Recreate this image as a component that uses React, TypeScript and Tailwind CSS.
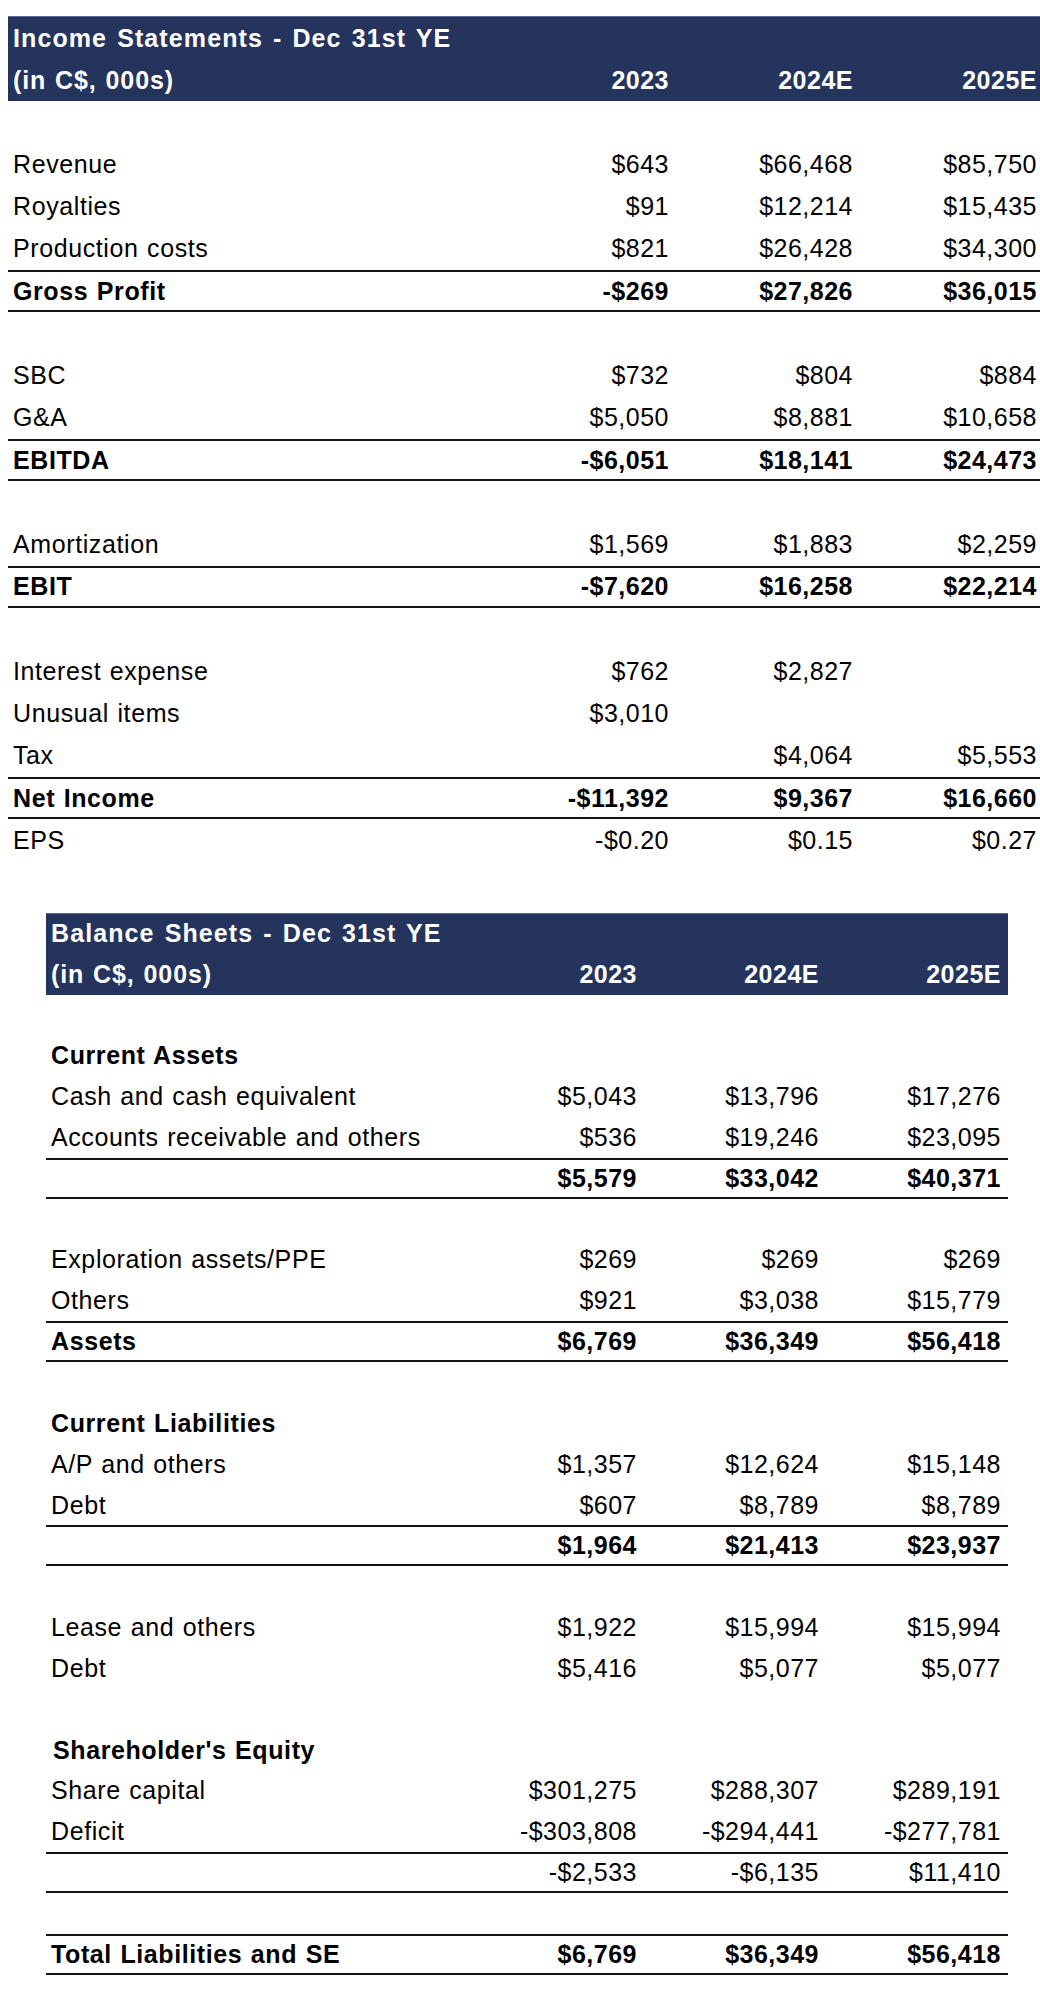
import React from 'react';

type Row = {
  label?: string;
  vals?: string[];
  bold?: boolean;
  rule?: boolean;
  indent?: boolean;
};

const income: Row[] = [
  {},
  { label: 'Revenue', vals: ['$643', '$66,468', '$85,750'] },
  { label: 'Royalties', vals: ['$91', '$12,214', '$15,435'] },
  { label: 'Production costs', vals: ['$821', '$26,428', '$34,300'] },
  { label: 'Gross Profit', vals: ['-$269', '$27,826', '$36,015'], bold: true, rule: true },
  {},
  { label: 'SBC', vals: ['$732', '$804', '$884'] },
  { label: 'G&A', vals: ['$5,050', '$8,881', '$10,658'] },
  { label: 'EBITDA', vals: ['-$6,051', '$18,141', '$24,473'], bold: true, rule: true },
  {},
  { label: 'Amortization', vals: ['$1,569', '$1,883', '$2,259'] },
  { label: 'EBIT', vals: ['-$7,620', '$16,258', '$22,214'], bold: true, rule: true },
  {},
  { label: 'Interest expense', vals: ['$762', '$2,827', ''] },
  { label: 'Unusual items', vals: ['$3,010', '', ''] },
  { label: 'Tax', vals: ['', '$4,064', '$5,553'] },
  { label: 'Net Income', vals: ['-$11,392', '$9,367', '$16,660'], bold: true, rule: true },
  { label: 'EPS', vals: ['-$0.20', '$0.15', '$0.27'] },
];

const balance: Row[] = [
  {},
  { label: 'Current Assets', bold: true },
  { label: 'Cash and cash equivalent', vals: ['$5,043', '$13,796', '$17,276'] },
  { label: 'Accounts receivable and others', vals: ['$536', '$19,246', '$23,095'] },
  { label: '', vals: ['$5,579', '$33,042', '$40,371'], bold: true, rule: true },
  {},
  { label: 'Exploration assets/PPE', vals: ['$269', '$269', '$269'] },
  { label: 'Others', vals: ['$921', '$3,038', '$15,779'] },
  { label: 'Assets', vals: ['$6,769', '$36,349', '$56,418'], bold: true, rule: true },
  {},
  { label: 'Current Liabilities', bold: true },
  { label: 'A/P and others', vals: ['$1,357', '$12,624', '$15,148'] },
  { label: 'Debt', vals: ['$607', '$8,789', '$8,789'] },
  { label: '', vals: ['$1,964', '$21,413', '$23,937'], bold: true, rule: true },
  {},
  { label: 'Lease and others', vals: ['$1,922', '$15,994', '$15,994'] },
  { label: 'Debt', vals: ['$5,416', '$5,077', '$5,077'] },
  {},
  { label: "Shareholder's Equity", bold: true, indent: true },
  { label: 'Share capital', vals: ['$301,275', '$288,307', '$289,191'] },
  { label: 'Deficit', vals: ['-$303,808', '-$294,441', '-$277,781'] },
  { label: '', vals: ['-$2,533', '-$6,135', '$11,410'], rule: true },
  {},
  { label: 'Total Liabilities and SE', vals: ['$6,769', '$36,349', '$56,418'], bold: true, rule: true },
];

const years = ['2023', '2024E', '2025E'];

const Sheet = ({
  title,
  rows,
  rowH,
  headH,
  labelW,
  colW,
  padR,
}: {
  title: string;
  rows: Row[];
  rowH: string;
  headH: string;
  labelW: string;
  colW: string;
  padR: string;
}) => (
  <div className="flex flex-col">
    {/* navy title block */}
    <div className="bg-[#25345d] text-white font-bold border-t border-[#5a6a90]">
      <div className={`flex items-center pl-[5px] tracking-[1.1px] [word-spacing:2px] ${headH}`}>{title}</div>
      <div className={`flex items-center ${headH}`}>
        <div className={`pl-[5px] tracking-[0.9px] [word-spacing:1px] ${labelW}`}>(in C$, 000s)</div>
        {years.map((y) => (
          <div key={y} className={`text-right ${colW} ${padR}`}>
            {y}
          </div>
        ))}
      </div>
    </div>

    {rows.map((r, i) => (
      <div
        key={i}
        className={`flex items-center ${rowH} ${r.bold ? 'font-bold' : ''} ${
          r.rule ? 'border-y-2 border-[#141414]' : ''
        }`}
      >
        <div
          className={`tracking-[0.6px] [word-spacing:1px] ${labelW} ${
            r.indent ? 'pl-[7px]' : 'pl-[5px]'
          }`}
        >
          {r.label}
        </div>
        {r.vals &&
          r.vals.map((v, j) => (
            <div key={j} className={`text-right ${colW} ${padR}`}>
              {v}
            </div>
          ))}
      </div>
    ))}
  </div>
);

export default function App() {
  return (
    <div className="w-[1040px] min-h-[1996px] bg-white text-black font-['Liberation_Sans',Arial,sans-serif] text-[25px] tracking-[0.5px] leading-none overflow-hidden">
      <div className="pt-4 pl-2">
        <Sheet
          title="Income Statements - Dec 31st YE"
          rows={income}
          rowH="h-[42.25px]"
          headH="h-[42px]"
          labelW="w-[480px]"
          colW="w-[184px]"
          padR="pr-[3px]"
        />
      </div>
      <div className="pt-[51px] pl-[46px] w-[1008px]">
        <Sheet
          title="Balance Sheets - Dec 31st YE"
          rows={balance}
          rowH="h-[40.85px]"
          headH="h-[40.5px]"
          labelW="w-[416px]"
          colW="w-[182px]"
          padR="pr-[7px]"
        />
      </div>
    </div>
  );
}
